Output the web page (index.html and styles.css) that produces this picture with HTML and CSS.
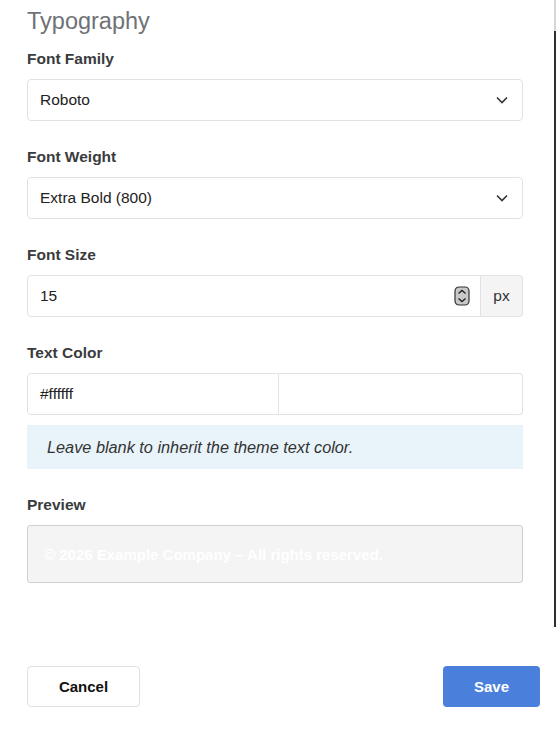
FILE: index.html
```html
<!DOCTYPE html>
<html lang="en">
<head>
    <meta charset="UTF-8">
    <meta name="viewport" content="width=device-width, initial-scale=1.0">
    <title>Typography Settings</title>
    <link rel="stylesheet" href="styles.css">
</head>
<body>
    <div class="panel">
        <h2 class="title">Typography</h2>

        <div class="field">
            <label>Font Family</label>
            <div class="select">
                <span>Roboto</span>
                <svg class="chevron" width="12" height="8" viewBox="0 0 12 8"><path d="M1 1.5 L6 6.5 L11 1.5" fill="none" stroke="#333" stroke-width="1.6"/></svg>
            </div>
        </div>

        <div class="field">
            <label>Font Weight</label>
            <div class="select">
                <span>Extra Bold (800)</span>
                <svg class="chevron" width="12" height="8" viewBox="0 0 12 8"><path d="M1 1.5 L6 6.5 L11 1.5" fill="none" stroke="#333" stroke-width="1.6"/></svg>
            </div>
        </div>

        <div class="field">
            <label>Font Size</label>
            <div class="input-group">
                <div class="input number">
                    <span>15</span>
                    <svg class="spinner" width="16" height="20" viewBox="0 0 16 20">
                        <rect x="1" y="1" width="14" height="18" rx="4" fill="#c8c8c8" stroke="#333" stroke-width="1.2"/>
                        <path d="M4.5 7.5 L8 4.5 L11.5 7.5" fill="none" stroke="#222" stroke-width="1.4"/>
                        <path d="M4.5 12.5 L8 15.5 L11.5 12.5" fill="none" stroke="#222" stroke-width="1.4"/>
                    </svg>
                </div>
                <div class="addon">px</div>
            </div>
        </div>

        <div class="field tight">
            <label>Text Color</label>
            <div class="color-row">
                <div class="input hex">#ffffff</div>
                <div class="input swatch"></div>
            </div>
        </div>

        <div class="info-box">Leave blank to inherit the theme text color.</div>

        <div class="field">
            <label>Preview</label>
            <div class="preview">© 2026 Example Company – All rights reserved.</div>
        </div>
    </div>

    <div class="footer">
        <button class="btn btn-cancel">Cancel</button>
        <button class="btn btn-save">Save</button>
    </div>

    <!-- scrollbar thumb overlay -->
    <div class="scrollbar"><div class="thumb"></div></div>
</body>
</html>
```

FILE: styles.css
```css
body {
    margin: 0;
    background: #fff;
    font-family: "Liberation Sans", Arial, sans-serif;
    color: #333;
    position: relative;
    height: 735px;
    overflow: hidden;
}
.panel {
    padding: 8px 33px 0 27px;
}
.title {
    margin: 0 0 15px;
    font-size: 23.5px;
    line-height: 26px;
    font-weight: normal;
    color: #6f7276;
}
.field {
    margin-bottom: 26px;
}
.field.tight {
    margin-bottom: 10px;
}
.field label {
    display: block;
    font-size: 15.5px;
    line-height: 20px;
    font-weight: bold;
    color: #3a3b3d;
    margin-bottom: 10px;
}
.select,
.input {
    height: 42px;
    box-sizing: border-box;
    border: 1px solid #e2e2e2;
    border-radius: 4px;
    background: #fff;
    font-size: 15.5px;
    color: #222;
    display: flex;
    align-items: center;
    padding: 0 12px;
}
.select {
    justify-content: space-between;
    padding-right: 14px;
}
.chevron {
    display: block;
}
.input-group {
    display: flex;
}
.input.number {
    flex: 1;
    justify-content: space-between;
    padding-right: 10px;
    border-radius: 4px 0 0 4px;
}
.spinner {
    display: block;
}
.addon {
    width: 42px;
    height: 42px;
    box-sizing: border-box;
    border: 1px solid #e2e2e2;
    border-left: none;
    border-radius: 0 4px 4px 0;
    background: #f4f4f4;
    display: flex;
    align-items: center;
    justify-content: center;
    font-size: 15.5px;
    color: #333;
}
.color-row {
    display: flex;
}
.input.hex {
    width: 252px;
    border-radius: 4px 0 0 4px;
}
.input.swatch {
    flex: 1;
    border-left: none;
    border-radius: 0 4px 4px 0;
}
.info-box {
    background: #e8f3fa;
    height: 44px;
    box-sizing: border-box;
    padding: 0 20px;
    display: flex;
    align-items: center;
    font-size: 16.3px;
    font-style: italic;
    color: #333;
    margin-bottom: 26px;
}
.preview {
    height: 58px;
    box-sizing: border-box;
    border: 1px solid #d0d0d0;
    border-radius: 3px;
    background: #f4f4f4;
    padding: 0 16px;
    display: flex;
    align-items: center;
    font-size: 15px;
    font-weight: 800;
    color: #fff;
}
.footer {
    display: flex;
    justify-content: space-between;
    padding: 0 16px 0 27px;
    margin-top: 83px;
}
.btn {
    height: 41px;
    border-radius: 4px;
    font-family: "Liberation Sans", Arial, sans-serif;
    font-size: 15px;
    font-weight: bold;
    cursor: pointer;
}
.btn-cancel {
    width: 113px;
    background: #fff;
    border: 1px solid #e0e0e0;
    color: #111;
}
.btn-save {
    width: 97px;
    background: #4a7fdb;
    border: none;
    color: #fff;
}
.scrollbar {
    position: absolute;
    top: 0;
    right: 0;
    width: 2px;
    height: 31px;
    background: #d6d6d6;
}
.scrollbar .thumb {
    position: absolute;
    top: 31px;
    left: 0;
    width: 2px;
    height: 596px;
    background: #2e2e2e;
}
```
